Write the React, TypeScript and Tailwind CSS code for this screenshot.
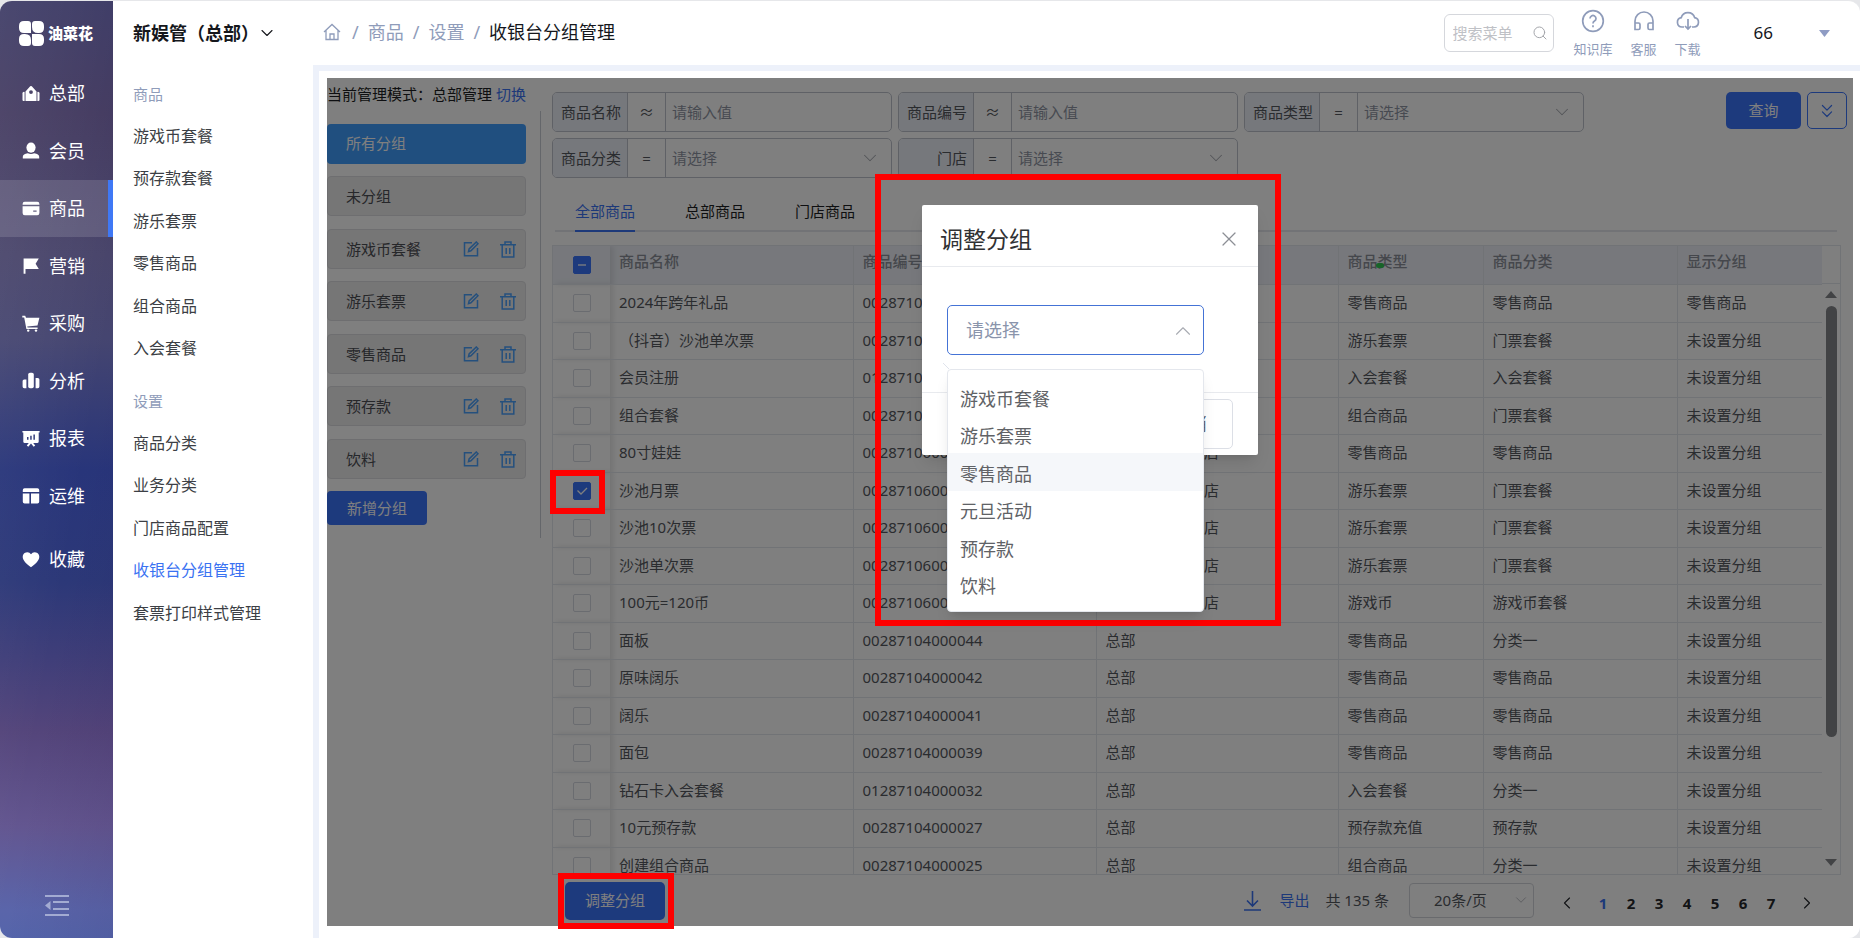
// App.tsx
import type { ReactNode } from "react";
import { ChevronDown, ChevronLeft, ChevronRight, ChevronUp, ChevronsDown, Search, X } from "lucide-react";

type Product = {
  name: string;
  code: string;
  store: string;
  type: string;
  category: string;
  group: string;
  checked?: boolean;
};

const STORE = "新娱管1号体验店";
const NONE = "未设置分组";

const products: Product[] = [
  { name: "2024年跨年礼品", code: "00287104000061", store: "总部", type: "零售商品", category: "零售商品", group: "零售商品" },
  { name: "（抖音）沙池单次票", code: "00287104000058", store: "总部", type: "游乐套票", category: "门票套餐", group: NONE },
  { name: "会员注册", code: "01287104000056", store: "总部", type: "入会套餐", category: "入会套餐", group: NONE },
  { name: "组合套餐", code: "00287104000053", store: "总部", type: "组合商品", category: "门票套餐", group: NONE },
  { name: "80寸娃娃", code: "00287106000052", store: STORE, type: "零售商品", category: "零售商品", group: NONE },
  { name: "沙池月票", code: "00287106000050", store: STORE, type: "游乐套票", category: "门票套餐", group: NONE, checked: true },
  { name: "沙池10次票", code: "00287106000049", store: STORE, type: "游乐套票", category: "门票套餐", group: NONE },
  { name: "沙池单次票", code: "00287106000048", store: STORE, type: "游乐套票", category: "门票套餐", group: NONE },
  { name: "100元=120币", code: "00287106000046", store: STORE, type: "游戏币", category: "游戏币套餐", group: NONE },
  { name: "面板", code: "00287104000044", store: "总部", type: "零售商品", category: "分类一", group: NONE },
  { name: "原味阔乐", code: "00287104000042", store: "总部", type: "零售商品", category: "零售商品", group: NONE },
  { name: "阔乐", code: "00287104000041", store: "总部", type: "零售商品", category: "零售商品", group: NONE },
  { name: "面包", code: "00287104000039", store: "总部", type: "零售商品", category: "零售商品", group: NONE },
  { name: "钻石卡入会套餐", code: "01287104000032", store: "总部", type: "入会套餐", category: "分类一", group: NONE },
  { name: "10元预存款", code: "00287104000027", store: "总部", type: "预存款充值", category: "预存款", group: NONE },
  { name: "创建组合商品", code: "00287104000025", store: "总部", type: "组合商品", category: "分类一", group: NONE },
];

const columns = ["商品名称", "商品编号", "所属门店", "商品类型", "商品分类", "显示分组"];
const groups = ["游戏币套餐", "游乐套票", "零售商品", "预存款", "饮料"];
const options = ["游戏币套餐", "游乐套票", "零售商品", "元旦活动", "预存款", "饮料"];

const mainNav: { label: string; icon: ReactNode }[] = [
  {
    label: "总部",
    icon: (
      <>
        <path fillRule="evenodd" d="M3.5 16V6.5L8.2 1.3a1.1 1.1 0 0 1 1.6 0l4.7 5.2V16zM9 5.2a1.9 1.9 0 1 0 0 3.8 1.9 1.9 0 0 0 0-3.8z" />
        <path d="M2.6 7v9H1.5A1.1 1.1 0 0 1 .5 15V9a1.6 1.6 0 0 1 2.1-2zM15.4 7v9h1.1a1.1 1.1 0 0 0 1-1V9a1.6 1.6 0 0 0-2.1-2z" />
      </>
    ),
  },
  {
    label: "会员",
    icon: (
      <>
        <ellipse cx="9" cy="5.6" rx="4.6" ry="5.1" />
        <path d="M.8 16.4v-1.6c0-2 1.8-3.1 5-3.6 2 1.1 4.4 1.1 6.4 0 3.2.5 5 1.6 5 3.6v1.6z" />
      </>
    ),
  },
  {
    label: "商品",
    icon: (
      <>
        <path d="M.6 4.8V4a2.2 2.2 0 0 1 2.2-2.2h12.4A2.2 2.2 0 0 1 17.4 4v.8z" />
        <path fillRule="evenodd" d="M.6 6.3h16.8V13a2.2 2.2 0 0 1-2.2 2.2H2.8A2.2 2.2 0 0 1 .6 13zm10.6 4.2v1.3h3.4v-1.3z" />
      </>
    ),
  },
  { label: "营销", icon: <path d="M1.6 1.5h15.2L13.6 6.7l3.2 5.3H3.5v4.8H1.6z" /> },
  {
    label: "采购",
    icon: (
      <>
        <path d="M.3.8h2.9l.8 2h13.4l-1.9 7.7-10.3.9.4 1.2h10v1.5H4.4L2.2 2.4H.3z" />
        <circle cx="6.2" cy="15.6" r="1.2" />
        <circle cx="14" cy="15.6" r="1.2" />
      </>
    ),
  },
  {
    label: "分析",
    icon: (
      <>
        <path d="M.6 9a1.6 1.6 0 0 1 1.6-1.6h2.2v8.800H2.200A1.600 1.600 0 0 1 .6 14.600zM13.600 6h2.200a1.600 1.600 0 0 1 1.600 1.600v7a1.600 1.600 0 0 1-1.600 1.600h-2.200z" />
        <rect x="6.2" y=".8" width="5.6" height="15.4" rx="1.8" />
      </>
    ),
  },
  {
    label: "报表",
    icon: (
      <path
        fillRule="evenodd"
        d="M.4 1h17.2v1.5h-.9v9.3c0 .7-.5 1.2-1.2 1.2h-4.300l2 2.600-1.500 1.100L9 13.600l-2.700 3.100-1.500-1.100 2-2.600H2.500c-.7 0-1.200-.5-1.200-1.200V2.500H.4zM5 7v2.800h1.500V7zm3.200-1.200v4h1.500v-4zm3.200-1.400v5.400h1.500V4.400z"
      />
    ),
  },
  {
    label: "运维",
    icon: <path d="M.8 5V3a1.8 1.8 0 0 1 1.8-1.8h12.800A1.800 1.800 0 0 1 17.200 3v2zM.8 6.500h6.600v10H2.600a1.800 1.800 0 0 1-1.800-1.800zM9 6.500h8.200v8.200a1.800 1.800 0 0 1-1.800 1.800H9z" />,
  },
  { label: "收藏", icon: <path d="M9 16.2C4.5 12.7.7 9.6.7 5.7A4.6 4.6 0 0 1 9 3.2a4.6 4.6 0 0 1 8.300 2.500c0 3.900-3.800 7-8.300 10.500z" /> },
];

function Sidebar() {
  return (
    <aside className="flex w-[113px] shrink-0 flex-col bg-[linear-gradient(100deg,#ffffff14_0%,#ffffff00_60%,#1a003014_100%),linear-gradient(180deg,#3b3964_0%,#42395f_12%,#48446a_27%,#454570_36%,#28357a_50%,#2c3878_62%,#3f3e79_70%,#54457b_78%,#635690_88%,#5a65aa_97%,#5565ab_100%)] text-white">
      <div className="flex h-16 items-center gap-1 pl-[19px]">
        <svg width="25" height="25" viewBox="0 0 25 25" fill="currentColor" aria-hidden="true">
          <path d="M5 0h4q3 0 3 3v9H5q-5 0-5-5V5q0-5 5-5zM16 0h4q5 0 5 5v2q0 5-5 5h-1q-6 0-6-6V3q0-3 3-3zM5 13h1q6 0 6 6v3q0 3-3 3H5q-5 0-5-5v-2q0-5 5-5zM13 13h7q5 0 5 5v2q0 5-5 5h-4q-3 0-3-3z" />
        </svg>
        <span className="text-[15px] font-black">油菜花</span>
      </div>
      <nav className="flex flex-col">
        {mainNav.map(({ label, icon }) => (
          <a
            key={label}
            href="#"
            className={`flex h-[58px] items-center gap-[9px] pl-[22px] text-[18px] odd:h-[57px] last:mt-[6px] ${
              label === "商品" ? "border-r-[5px] border-[#3f78f5] bg-white/13" : ""
            }`}
          >
            <svg width="18" height="18" viewBox="0 0 18 18" fill="currentColor" aria-hidden="true">
              {icon}
            </svg>
            {label}
          </a>
        ))}
      </nav>
      <button type="button" aria-label="收起菜单" className="mx-auto mt-auto mb-[21px] text-[#a3abd2]">
        <svg width="24" height="22" viewBox="0 0 24 22" fill="currentColor">
          <path d="M0 0h24v2H0zM8 6h16v2H8zM8 13h16v2H8zM0 19h24v2H0zM0 10.5 5.5 6v9z" />
        </svg>
      </button>
    </aside>
  );
}

function SubMenu({ title, items, active }: { title: string; items: string[]; active?: string }) {
  return (
    <section>
      <h2 className="flex h-[39px] items-center text-[15px] text-[#8f9cba]">{title}</h2>
      <ul>
        {items.map((item) => (
          <li key={item} className="flex h-[42px] items-center text-base odd:h-[43px]">
            <a href="#" className={item === active ? "text-[#3a72f2]" : "text-[#3c3f45]"}>
              {item}
            </a>
          </li>
        ))}
      </ul>
    </section>
  );
}

function TopBar() {
  return (
    <header className="flex h-16 items-center pl-[10px]">
      <nav aria-label="面包屑" className="flex items-center gap-[9px] pb-[2px] text-[18px] text-[#8f9cba]">
        <a href="#" aria-label="首页" className="mr-[2px]">
          <svg width="18" height="18" viewBox="0 0 18 18" fill="none" stroke="currentColor" strokeWidth="1.3">
            <path d="M1 9 9 1.5 17 9M3 7.5V16.5h12V7.5M7 16.5v-5.5h4v5.5" />
          </svg>
        </a>
        <span>/</span>
        <a href="#">商品</a>
        <span>/</span>
        <a href="#">设置</a>
        <span>/</span>
        <span className="text-[#15171c]">收银台分组管理</span>
      </nav>
      <div className="ml-auto flex items-center">
        <label className="flex h-[38px] w-[110px] items-center rounded-md border border-[#d5d7dc] pr-[5px] pl-2">
          <input aria-label="搜索菜单" placeholder="搜索菜单" className="w-full min-w-0 text-[15px] outline-none placeholder:text-[#bfc1c6]" />
          <Search size={16} strokeWidth={1.5} className="shrink-0 text-[#a4a6ab]" />
        </label>
        <div className="ml-5 flex gap-[18px] text-[13px] leading-[18px] text-[#8f9cba]">
          <a href="#" className="flex flex-col items-center gap-[7px]">
            <svg width="24" height="24" viewBox="0 0 24 24" fill="none" stroke="currentColor" strokeWidth="1.7">
              <circle cx="12" cy="12" r="10.3" />
              <path d="M9 9.5a3 3 0 1 1 4.5 2.6c-1 .6-1.5 1.1-1.5 2.4M12 16.3v2" />
            </svg>
            知识库
          </a>
          <a href="#" className="flex flex-col items-center gap-[7px]">
            <svg width="24" height="24" viewBox="0 0 24 24" fill="none" stroke="currentColor" strokeWidth="1.7">
              <path d="M3 20.5V12a9 9 0 0 1 18 0v8.5M3 14h3.5q1.5 0 1.5 1.5V19q0 1.5-1.5 1.5H3zM21 14h-3.5q-1.5 0-1.5 1.5V19q0 1.5 1.5 1.5H21z" />
            </svg>
            客服
          </a>
          <a href="#" className="flex flex-col items-center gap-[7px]">
            <svg width="24" height="24" viewBox="0 0 24 24" fill="none" stroke="currentColor" strokeWidth="1.7">
              <path d="M8 18H6a4.7 4.7 0 0 1-.8-9.3 7 7 0 0 1 13.5 0A4.7 4.7 0 0 1 18 18h-2M12 10v10M9 17l3 3 3-3" />
            </svg>
            下载
          </a>
        </div>
        <button type="button" className="mr-[30px] ml-[53px] flex items-center gap-[46px] text-[17px] text-[#15171c]">
          66
          <svg width="11" height="7" viewBox="0 0 11 7" className="text-[#8f9cc4]" fill="currentColor">
            <path d="M0 0h11L5.5 7z" />
          </svg>
        </button>
      </div>
    </header>
  );
}

function GroupPanel() {
  return (
    <div className="flex w-[214px] shrink-0 flex-col text-[15px]">
      <p className="h-[33px] pt-[5px] leading-[22px] whitespace-nowrap text-[#1c1e22]">
        当前管理模式：总部管理{" "}
        <a href="#" className="text-[#3a72f2]">
          切换
        </a>
      </p>
      <div className="border-r border-[#c8ccd4] py-[13px] pr-[14px]">
        <ul className="flex flex-col gap-3 text-[#4c4e54]">
          <li className="flex h-10 items-center rounded-sm bg-[#409eff] pb-[2px] pl-[19px] text-white">所有分组</li>
          <li className="mb-px flex h-10 items-center rounded-sm border border-[#dcdde0] bg-[#ececec] pl-[18px]">未分组</li>
          {groups.map((group) => (
            <li
              key={group}
              className="flex h-10 items-center rounded-sm border border-[#dcdde0] bg-[#ececec] pr-[9px] pl-[18px] even:mb-px"
            >
              <span className="flex-1">{group}</span>
              <button type="button" aria-label={`编辑${group}`} className="mr-[21px] text-[#4aa0fb]">
                <svg width="16" height="16" viewBox="0 0 16 16" fill="none" stroke="currentColor" strokeWidth="1.5">
                  <path d="M9 1.8H1.5v13h13V7M5.5 10.6l.6-2.6 7.2-7 1.7 1.7-7.1 7.1z" />
                </svg>
              </button>
              <button type="button" aria-label={`删除${group}`} className="text-[#4aa0fb]">
                <svg width="16" height="17" viewBox="0 0 16 17" fill="none" stroke="currentColor" strokeWidth="1.5">
                  <path d="M0 3.7h16M5 3.5V1h6v2.5M2.2 4v12h11.6V4M6.2 7v6M9.8 7v6" />
                </svg>
              </button>
            </li>
          ))}
        </ul>
        <button type="button" className="mt-3 h-[34px] rounded-sm bg-[#3a74fb] px-5 text-white">
          新增分组
        </button>
      </div>
    </div>
  );
}

function Filter({ label, op, select }: { label: string; op: string; select?: boolean }) {
  return (
    <div className="flex h-10 w-[340px] overflow-hidden rounded-[5px] border border-[#bfc3cc] text-[15px]">
      <span className="flex w-[75px] items-center justify-end border-r border-[#bfc3cc] bg-[#edf0f8] pr-[6px] text-[#55585e]">{label}</span>
      <button type="button" className="w-[38px] border-r border-[#bfc3cc] text-[#55585e]">
        {op}
      </button>
      {select ? (
        <span className="relative flex flex-1">
          <select aria-label={label} className="w-full appearance-none pl-[6px] text-[#8f95a3]">
            <option>请选择</option>
          </select>
          <ChevronDown size={22} strokeWidth={1.1} className="pointer-events-none absolute top-2 right-[10px] text-[#a8abb2]" />
        </span>
      ) : (
        <input aria-label={label} placeholder="请输入值" className="min-w-0 flex-1 pl-[6px] placeholder:text-[#8f95a3]" />
      )}
    </div>
  );
}

function CheckBox({ label, checked, partial }: { label: string; checked?: boolean; partial?: boolean }) {
  return (
    <span className="relative ml-5 block size-[18px]">
      <input
        type="checkbox"
        aria-label={label}
        defaultChecked={checked || partial}
        className="block size-[18px] appearance-none rounded-xs border border-[#d5d8e0] checked:border-[#3a74fb] checked:bg-[#3a74fb]"
      />
      {(checked || partial) && (
        <svg width="18" height="18" viewBox="0 0 18 18" fill="none" stroke="#fff" strokeWidth="1.3" className="pointer-events-none absolute inset-0">
          <path d={partial ? "M5 9h8" : "M4.5 8.5 8 12l6-6"} />
        </svg>
      )}
    </span>
  );
}

function ProductTable() {
  return (
    <div className="mt-[13px] mr-3 flex min-h-0 flex-1 overflow-hidden border border-[#e3e6ed]">
      <div className="min-w-0 flex-1 overflow-hidden">
        <table className="w-full table-fixed text-left text-[15px] text-[#55585e]">
          <colgroup>
            <col className="w-[57px]" />
            <col className="w-[243px]" />
            <col className="w-[243px]" />
            <col className="w-[242px]" />
            <col className="w-[145px]" />
            <col className="w-[194px]" />
            <col className="w-[145px]" />
          </colgroup>
          <thead>
            <tr className="h-[38px] bg-[#eef1f8] text-[#8b8f98]">
              <th className="border-b border-[#e3e6ed] p-0 shadow-[3px_0_6px_#0000001a]">
                <CheckBox label="全选" partial />
              </th>
              {columns.map((column) => (
                <th key={column} className="relative border-r border-b border-[#e3e6ed] pt-0 pb-2 pl-[9px] font-medium">
                  {column}
                  {column === "商品类型" && <i className="absolute top-[17px] left-[37px] h-[5px] w-2 rounded-full bg-[#30c850]" />}
                </th>
              ))}
            </tr>
          </thead>
          <tbody>
            {products.map((product) => (
              <tr key={product.code} className="h-[37px] odd:h-[38px]">
                <td className="border-b border-[#e3e6ed] p-0 shadow-[3px_0_6px_#0000001a]">
                  <CheckBox label={product.name} checked={product.checked} />
                </td>
                {[product.name, product.code, product.store, product.type, product.category, product.group].map((value, i) => (
                  <td key={i} className="truncate border-r border-b border-[#e3e6ed] pt-0 pb-px pl-[9px]">
                    {value}
                  </td>
                ))}
              </tr>
            ))}
          </tbody>
        </table>
      </div>
      <div className="flex w-[18px] flex-col items-center text-[#85878b]">
        <div className="mb-[7px] h-[38px] w-full border-b border-[#e3e6ed]" />
        <svg width="12" height="7" viewBox="0 0 12 7" fill="currentColor">
          <path d="M0 7h12L6 0z" />
        </svg>
        <div className="mt-2 mb-2 flex w-[11px] flex-1 flex-col">
          <div className="h-[79%] rounded-full bg-[#85878b]" />
        </div>
        <svg width="12" height="7" viewBox="0 0 12 7" fill="currentColor" className="mb-2">
          <path d="M0 0h12L6 7z" />
        </svg>
      </div>
    </div>
  );
}

function Footer() {
  return (
    <div className="flex h-[51px] shrink-0 items-center pr-9 pl-[13px] text-[15px] text-[#55585e]">
      <button type="button" className="h-[38px] rounded-[5px] bg-[#3a74fb] px-5 text-white">
        调整分组
      </button>
      <a href="#" className="ml-auto flex items-center gap-[18px] text-[#3a72f2]">
        <svg width="17" height="20" viewBox="0 0 17 20" fill="none" stroke="currentColor" strokeWidth="1.6">
          <path d="M8.5 0v15M3 9.5 8.5 15 14 9.5M0 19h17" />
        </svg>
        导出
      </a>
      <span className="ml-4">共 135 条</span>
      <span className="relative ml-5 flex h-[35px] w-[125px]">
        <select aria-label="每页条数" className="w-full appearance-none rounded-sm border border-[#d2d5db] pl-6">
          <option>20条/页</option>
        </select>
        <ChevronDown size={18} strokeWidth={1.2} className="pointer-events-none absolute top-2 right-1 text-[#b4b7be]" />
      </span>
      <nav aria-label="分页" className="mt-[5px] ml-[23px] flex items-center font-bold text-[#26282d]">
        <button type="button" aria-label="上一页">
          <ChevronLeft size={20} strokeWidth={1.4} />
        </button>
        <div className="mr-3 ml-3 flex">
          {[1, 2, 3, 4, 5, 6, 7].map((page) => (
            <button key={page} type="button" className={page === 1 ? "w-7 text-[#3a72f2]" : "w-7"}>
              {page}
            </button>
          ))}
        </div>
        <button type="button" aria-label="下一页">
          <ChevronRight size={20} strokeWidth={1.4} />
        </button>
      </nav>
    </div>
  );
}

function GroupDialog() {
  return (
    <div role="dialog" aria-labelledby="dialog-title" className="relative mt-[127px] h-[250px] w-[336px] rounded-xs bg-white shadow-lg">
      <div className="flex h-[62px] items-center justify-between border-b border-[#e8eaee] pt-[7px] pr-[17px] pl-[18px]">
        <h1 id="dialog-title" className="text-[23px] text-[#303133]">
          调整分组
        </h1>
        <button type="button" aria-label="关闭" className="text-[#8c8f95]">
          <X size={24} strokeWidth={1.2} />
        </button>
      </div>
      <div className="h-[126px] border-b border-[#e8eaee] px-[25px] pt-[38px]">
        <div className="relative w-[257px]">
          <select aria-label="选择分组" className="h-[50px] w-full appearance-none rounded-[5px] border border-[#4473d6] pl-[18px] text-[18px] text-[#8a94ab]">
            <option>请选择</option>
          </select>
          <ChevronUp size={26} strokeWidth={1} className="pointer-events-none absolute top-[13px] right-2 text-[#a8abb2]" />
          <svg width="6" height="6" viewBox="0 0 6 6" stroke="#dfe3ec" className="absolute top-[58px] -left-1">
            <path d="M0 0l6 6" />
          </svg>
          <ul role="listbox" className="absolute top-16 left-0 z-10 w-full rounded-sm border border-[#e4e7ed] bg-white py-2 text-[18px] text-[#606266] shadow-lg">
            {options.map((option) => (
              <li
                key={option}
                role="option"
                aria-selected={false}
                className={`flex h-[37px] items-center pt-1 pl-3 odd:h-[38px] ${option === "零售商品" ? "bg-[#f5f7fa]" : ""}`}
              >
                {option}
              </li>
            ))}
          </ul>
        </div>
      </div>
      <div className="flex justify-end gap-3 pt-[6px] pr-[25px] text-[18px]">
        <button type="button" className="h-[50px] rounded-[5px] bg-[#3a74fb] px-[25px] text-white">
          确定
        </button>
        <button type="button" className="h-[50px] rounded-[5px] border border-[#dcdfe6] px-[25px] text-[#606266]">
          取消
        </button>
      </div>
      {/* callout frame around the dialog */}
      <div className="pointer-events-none absolute -top-[31px] -left-[47px] h-[452px] w-[406px] border-6 border-[#fe0000]" />
    </div>
  );
}

export default function App() {
  return (
    <div className="h-screen bg-[#e6e7ea] font-['Noto_Sans','Noto_Sans_CJK_SC',sans-serif]">
      <div className="flex h-full overflow-hidden rounded-xl border-t border-[#e6e7ea] bg-white">
        <Sidebar />
        <div className="w-[200px] shrink-0 pl-5">
          <button type="button" className="flex h-16 items-center text-[18px] font-bold whitespace-nowrap text-[#15171c]">
            新娱管（总部）
            <ChevronDown size={20} strokeWidth={1.3} className="-ml-[2px] shrink-0" />
          </button>
          <div className="flex flex-col gap-[13px] pt-[10px]">
            <SubMenu title="商品" items={["游戏币套餐", "预存款套餐", "游乐套票", "零售商品", "组合商品", "入会套餐"]} />
            <SubMenu
              title="设置"
              items={["商品分类", "业务分类", "门店商品配置", "收银台分组管理", "套票打印样式管理"]}
              active="收银台分组管理"
            />
          </div>
        </div>
        <div className="flex min-w-0 flex-1 flex-col">
          <TopBar />
          <div className="flex min-h-0 flex-1 bg-[#edf1fa] pt-[6px] pl-[6px]">
            <div className="flex min-w-0 flex-1 bg-white pt-[7px] pr-[7px] pb-3 pl-2">
              <main className="relative flex min-w-0 flex-1 items-start">
                <GroupPanel />
                <div className="flex min-w-0 flex-1 flex-col self-stretch pl-[11px]">
                  <div className="flex items-start gap-[6px] pt-[14px] pr-[6px]">
                    <div className="flex flex-1 flex-wrap gap-[6px]">
                      <Filter label="商品名称" op="≈" />
                      <Filter label="商品编号" op="≈" />
                      <Filter label="商品类型" op="=" select />
                      <Filter label="商品分类" op="=" select />
                      <Filter label="门店" op="=" select />
                    </div>
                    <button type="button" className="h-[37px] w-[75px] rounded-[5px] bg-[#3a74fb] text-[15px] text-white">
                      查询
                    </button>
                    <button type="button" aria-label="展开" className="flex h-[37px] w-10 items-center justify-center rounded-[5px] border border-[#3a74fb] text-[#3a74fb]">
                      <ChevronsDown size={22} strokeWidth={1.3} />
                    </button>
                  </div>
                  <div role="tablist" className="mt-3 mr-4 ml-[3px] flex h-[42px] gap-[50px] border-b-2 border-[#e4e7ed] pl-5 text-[15px] text-[#1c1e22]">
                    <button role="tab" type="button" aria-selected="true" className="-mb-[2px] border-b-2 border-[#3a72f2] pt-[2px] text-[#3a72f2]">
                      全部商品
                    </button>
                    <button role="tab" type="button" aria-selected="false" className="pt-[2px]">
                      总部商品
                    </button>
                    <button role="tab" type="button" aria-selected="false" className="pt-[2px]">
                      门店商品
                    </button>
                  </div>
                  <ProductTable />
                  <Footer />
                </div>
                <div className="absolute inset-0 flex items-start justify-center bg-black/50">
                  <GroupDialog />
                  <div className="absolute top-[392px] left-[223px] h-11 w-[55px] border-6 border-[#fe0000]" />
                  <div className="absolute -bottom-[3px] left-[231px] h-14 w-[116px] border-6 border-[#fe0000]" />
                </div>
              </main>
            </div>
          </div>
        </div>
      </div>
    </div>
  );
}
